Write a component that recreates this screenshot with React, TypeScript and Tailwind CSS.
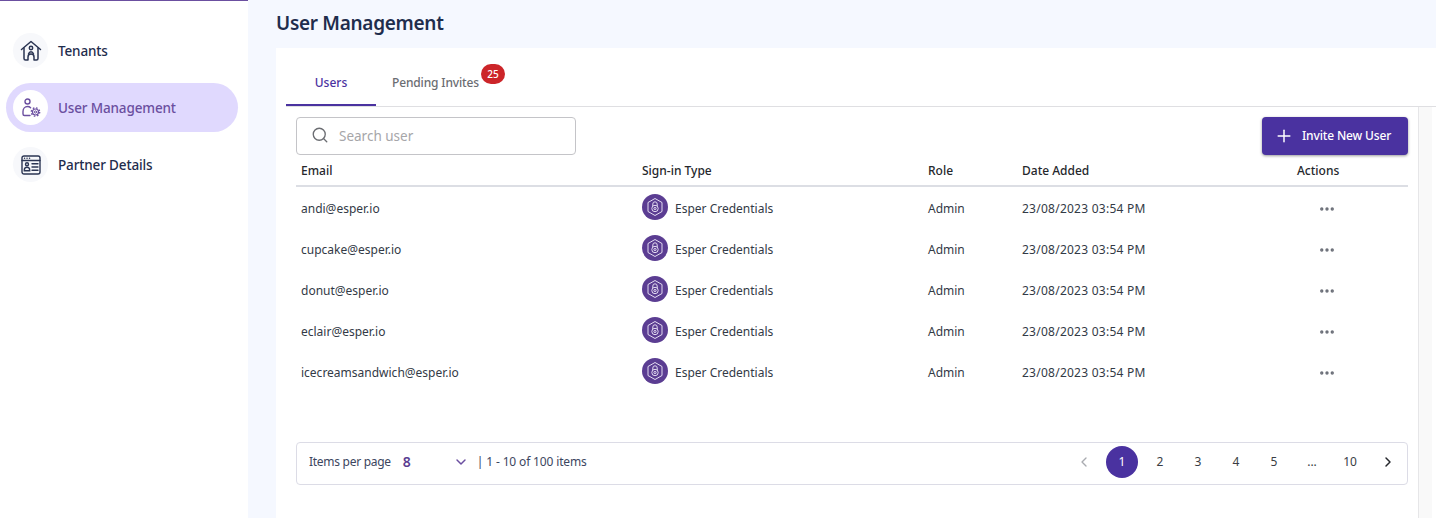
import React from "react";
import { ChevronDown, ChevronLeft, ChevronRight, MoreHorizontal, Plus, Search } from "lucide-react";

const font = "font-['Noto_Sans','Liberation_Sans',sans-serif]";

const users = [
  "andi@esper.io",
  "cupcake@esper.io",
  "donut@esper.io",
  "eclair@esper.io",
  "icecreamsandwich@esper.io",
];

const TenantsIcon = () => (
  <svg width="22" height="22" viewBox="0 0 22 22" fill="none" stroke="#2b3553" strokeWidth="1.5" strokeLinejoin="round" strokeLinecap="round">
    <path d="M1.500 9.500 11 1.500l9.500 8" />
    <path d="M4 8v10.500a1.500 1.500 0 0 0 1.500 1.500H8v-3a3 3 0 0 1 6 0v3h2.500a1.500 1.500 0 0 0 1.500-1.500V8" />
    <circle cx="11" cy="8" r="1.700" />
    <path d="M8.500 14c.5-1.500 1.400-2.200 2.500-2.200s2 .7 2.500 2.200" />
  </svg>
);

const UserGearIcon = () => (
  <svg width="20" height="20" viewBox="0 0 20 20" fill="none" stroke="#6b4fa0" strokeWidth="1.400" strokeLinecap="round">
    <circle cx="6.500" cy="3.500" r="2.500" />
    <path d="M9 17.500H3.500A1.500 1.500 0 0 1 2 16v-2.500C2 10.500 4 8.500 6.500 8.500c1.200 0 2.300.4 3.100 1.200" />
    <circle cx="14.500" cy="14" r="1.100" strokeWidth="1" />
    <circle cx="14.500" cy="14" r="3" strokeWidth="1.200" />
    <circle cx="14.500" cy="14" r="4.200" strokeWidth="1.300" strokeDasharray="1.600 1.700" strokeLinecap="butt" />
  </svg>
);

const PartnerIcon = () => (
  <svg width="20" height="20" viewBox="0 0 20 20" fill="none" stroke="#2b3553" strokeWidth="1.400" strokeLinecap="round">
    <rect x="1" y="1" width="18" height="18" rx="2" />
    <path d="M1 5.500h18" />
    <path d="M3.500 3.300h.1M6 3.300h.1M8.500 3.300h.1" />
    <circle cx="6" cy="9.300" r="1.500" />
    <path d="M3.300 15.800v-.8c0-1.600 1.200-2.800 2.700-2.800s2.700 1.200 2.700 2.800v.8z" />
    <path d="M11 8.800h6M11 12h6M11 15.200h6" />
  </svg>
);

const EsperBadge = () => (
  <span className="flex h-[26px] w-[26px] shrink-0 -translate-y-[2px] items-center justify-center rounded-full bg-[#5b3d92]">
    <svg width="26" height="26" viewBox="0 0 26 26" fill="none" stroke="#e4dcf2" strokeWidth="1">
      <path d="M13 4.500 20 8.500v9L13 21.500 6 17.500v-9z" />
      <path d="M10.800 12V10a2.200 2.200 0 0 1 4.400 0v2" />
      <circle cx="13" cy="14.500" r="3.200" />
      <circle cx="13" cy="14.500" r="1.100" />
    </svg>
  </span>
);

const NavItem = ({ label, icon, active }: { label: string; icon: React.ReactNode; active?: boolean }) => (
  <div className={`flex h-[49px] w-[232px] items-center gap-[10px] rounded-full pl-[7px] ${active ? "bg-[#e0d9fe]" : ""}`}>
    <span className={`flex h-[35px] w-[35px] items-center justify-center rounded-full ${active ? "bg-white" : "bg-[#f7f8fb]"}`}>
      {icon}
    </span>
    <span className={`pt-[2px] text-[13.5px] font-medium tracking-[-0.15px] ${active ? "text-[#6b4fa0]" : "text-[#1f2d4d]"}`}>{label}</span>
  </div>
);

const Sidebar = () => (
  <aside className="flex w-[248px] shrink-0 flex-col gap-2 border-t-[1px] border-[#6b4fa0] bg-white pl-[6px] pt-[25px]">
    <NavItem label="Tenants" icon={<TenantsIcon />} />
    <NavItem label="User Management" icon={<UserGearIcon />} active />
    <NavItem label="Partner Details" icon={<PartnerIcon />} />
  </aside>
);

const gridCols = "grid grid-cols-[341px_286px_94px_254px_132px] items-center";

const UsersTable = () => (
  <div className="text-[12px] text-[#333a46]">
    <div className={`${gridCols} h-[32px] border-b-2 border-[#dcdee4] pl-[5px] pt-[2px] font-medium text-[#25272c]`}>
      <span>Email</span>
      <span>Sign-in Type</span>
      <span>Role</span>
      <span>Date Added</span>
      <span className="pl-[21px]">Actions</span>
    </div>
    {users.map((email) => (
      <div key={email} className={`${gridCols} h-[41px] pl-[5px] pt-[2px]`}>
        <span>{email}</span>
        <span className="flex items-center gap-[7px]">
          <EsperBadge />
          Esper Credentials
        </span>
        <span>Admin</span>
        <span className="tracking-[0.25px]">23/08/2023 03:54 PM</span>
        <span className="pl-[42px]">
          <MoreHorizontal size={18} strokeWidth={2.500} className="text-[#6b6f78]" />
        </span>
      </div>
    ))}
  </div>
);

const Pagination = () => (
  <div className="mt-[50px] flex h-[43px] items-center justify-between rounded-[4px] border border-[#dcdce6] pb-[4px] pl-3 text-[12px]">
    <div className="flex items-center text-[#3c4660]">
      <span className="tracking-[-0.28px]">Items per page</span>
      <span className="ml-3 w-[50px] text-[14px] font-semibold text-[#5b3d92]">8</span>
      <ChevronDown size={16} strokeWidth={2.200} className="text-[#6b4fa0]" />
      <span className="ml-[8px] tracking-[-0.15px]">| 1 - 10 of 100 items</span>
    </div>
    <div className="flex items-center text-[#3a3d44]">
      <span className="flex h-8 w-[38px] items-center justify-center text-[#a9abb0]">
        <ChevronLeft size={16} />
      </span>
      <span className="mx-[3px] flex h-8 w-8 items-center justify-center rounded-full bg-[#4a32a0] text-white">1</span>
      {["2", "3", "4", "5", "...", "10"].map((p) => (
        <span key={p} className="flex h-8 w-[38px] items-center justify-center">
          {p}
        </span>
      ))}
      <span className="flex h-8 w-[38px] items-center justify-center text-[#25272c]">
        <ChevronRight size={16} strokeWidth={2.200} />
      </span>
    </div>
  </div>
);

export default function App() {
  return (
    <div className={`${font} flex h-[518px] w-[1436px] overflow-hidden bg-[#f5f8ff]`}>
      <Sidebar />
      <main className="flex min-w-0 flex-1 flex-col pl-[28px]">
        <h1 className="flex h-[48px] items-start pt-[9px] text-[19px] font-semibold leading-[28px] tracking-[-0.3px] text-[#1f2d4d]">
          User Management
        </h1>
        <section className="flex flex-1 flex-col bg-white pl-[10px]">
          <div className="flex h-[59px] items-end border-b border-[#dfdfe2]">
            <div className="flex h-[35px] w-[90px] justify-center border-b-2 border-[#4a32a0] pt-[3px] text-[12px] font-medium text-[#4a32a0]">
              Users
            </div>
            <div className="relative ml-4 h-[35px] pt-[3px] text-[12px] font-medium tracking-[-0.15px] text-[#6b6d72]">
              Pending Invites
              <span className="absolute -right-[26px] -top-[7px] flex h-5 w-6 items-center justify-center rounded-full bg-[#cc2529] text-[10px] tracking-normal text-white">
                25
              </span>
            </div>
          </div>
          <div className="flex flex-1">
            <div className="w-[1122px] pl-[10px] pt-[10px]">
              <div className="flex h-[38px] items-center justify-between">
                <div className="flex h-[38px] w-[280px] items-center gap-[10px] rounded-[4px] border border-[#c4c4c8] pl-[14px] text-[13.5px] text-[#a6a6a9]">
                  <Search size={18} strokeWidth={1.800} className="-mt-[2px] text-[#6b6d72]" />
                  Search user
                </div>
                <button className="flex h-[38px] w-[146px] items-center gap-[8px] rounded-[4px] bg-[#4a32a0] pl-[12px] text-[12px] font-medium tracking-[-0.15px] text-white shadow-[0_1px_3px_rgba(0,0,0,0.4)]">
                  <Plus size={20} strokeWidth={1.800} />
                  Invite New User
                </button>
              </div>
              <UsersTable />
              <Pagination />
            </div>
            <div className="ml-[10px] mr-[4px] flex-1 border-l border-[#e6e6e8] bg-[#f9f9f9]" />
          </div>
        </section>
      </main>
    </div>
  );
}
